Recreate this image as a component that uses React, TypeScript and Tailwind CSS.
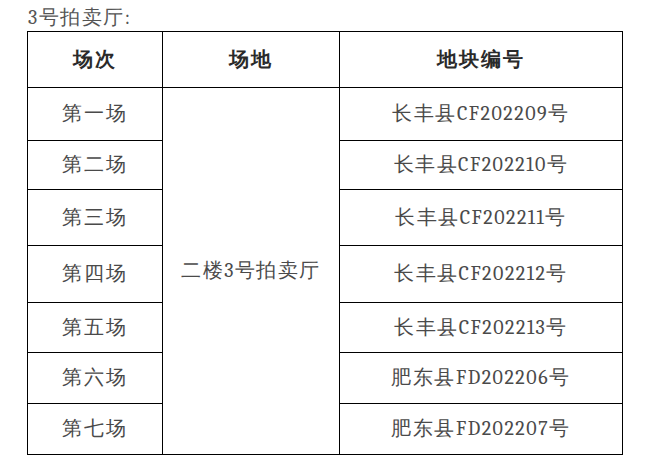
import React from 'react';

const rows = [
    { session: '第一场', plot: '长丰县CF202209号', h: 'h-[53px]' },
    { session: '第二场', plot: '长丰县CF202210号', h: 'h-[49px]' },
    { session: '第三场', plot: '长丰县CF202211号', h: 'h-[56px]' },
    { session: '第四场', plot: '长丰县CF202212号', h: 'h-[57px]' },
    { session: '第五场', plot: '长丰县CF202213号', h: 'h-[50px]' },
    { session: '第六场', plot: '肥东县FD202206号', h: 'h-[51px]' },
    { session: '第七场', plot: '肥东县FD202207号', h: 'h-[51px]' },
];

const App: React.FC = () => {
    return (
        <div className="w-[646px] h-[462px] bg-white overflow-hidden font-serif">
            {/* Title */}
            <div className="h-[31px] pl-[28px] pt-[5px] text-[20px] leading-[26px] font-light tracking-[1.5px] text-[#555]">
                3号拍卖厅:
            </div>

            {/* Schedule table */}
            <div className="pl-[27px]">
                <table className="border-collapse table-fixed w-[595px]">
                    <colgroup>
                        <col className="w-[135px]" />
                        <col className="w-[177px]" />
                        <col className="w-[283px]" />
                    </colgroup>
                    <thead>
                        <tr className="h-[56px]">
                            <th className="border border-black p-0 text-center text-[20px] font-semibold tracking-[2px] text-[#2a2a2a]">场次</th>
                            <th className="border border-black p-0 text-center text-[20px] font-semibold tracking-[2px] text-[#2a2a2a]">场地</th>
                            <th className="border border-black p-0 text-center text-[20px] font-semibold tracking-[2px] text-[#2a2a2a]">地块编号</th>
                        </tr>
                    </thead>
                    <tbody>
                        {rows.map((r, i) => (
                            <tr key={r.session} className={r.h}>
                                <td className="border border-black p-0 text-center text-[20px] font-light tracking-[2px] text-[#4a4a4a]">
                                    {r.session}
                                </td>
                                {i === 0 && (
                                    <td
                                        rowSpan={rows.length}
                                        className="border border-black p-0 text-center align-middle text-[20px] font-light tracking-[1.5px] text-[#4a4a4a]"
                                    >
                                        二楼3号拍卖厅
                                    </td>
                                )}
                                <td className="border border-black p-0 text-center text-[20px] font-light tracking-[1.5px] text-[#4a4a4a]">
                                    {r.plot}
                                </td>
                            </tr>
                        ))}
                    </tbody>
                </table>
            </div>
        </div>
    );
};

export default App;
